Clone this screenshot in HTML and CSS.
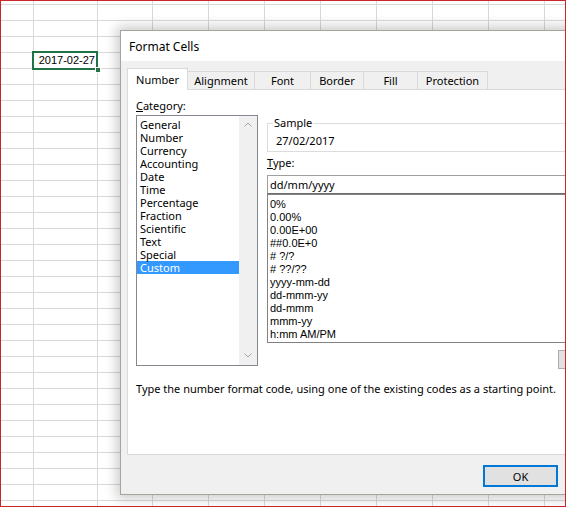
FILE: index.html
```html
<!DOCTYPE html>
<html lang="en">
<head>
  <meta charset="UTF-8">
  <title>Format Cells</title>
  <link rel="stylesheet" href="styles.css">
</head>
<body>
  <div class="screen">
    <!-- Active cell -->
    <div class="cell-cursor">2017-02-27<i class="fill-handle"></i></div>

    <!-- Format Cells dialog -->
    <div class="dialog">
      <div class="titlebar">Format Cells</div>
      <div class="dialog-body">
        <div class="tabs">
          <div class="tab tab--active">Number</div>
          <div class="tab">Alignment</div>
          <div class="tab">Font</div>
          <div class="tab">Border</div>
          <div class="tab">Fill</div>
          <div class="tab">Protection</div>
        </div>

        <div class="panel">
          <div class="columns">
            <div class="category">
              <div class="label"><u>C</u>ategory:</div>
              <div class="listbox">
                <ul class="items">
                  <li>General</li>
                  <li>Number</li>
                  <li>Currency</li>
                  <li>Accounting</li>
                  <li>Date</li>
                  <li>Time</li>
                  <li>Percentage</li>
                  <li>Fraction</li>
                  <li>Scientific</li>
                  <li>Text</li>
                  <li>Special</li>
                  <li class="selected">Custom</li>
                </ul>
                <div class="scrollbar">
                  <svg width="8" height="5" viewBox="0 0 8 5"><polyline points="0.5,4.5 4,1 7.5,4.5" /></svg>
                  <svg width="8" height="5" viewBox="0 0 8 5"><polyline points="0.5,0.5 4,4 7.5,0.5" /></svg>
                </div>
              </div>
            </div>

            <div class="format">
              <fieldset class="sample">
                <legend>Sample</legend>
                <div class="sample-value">27/02/2017</div>
              </fieldset>
              <div class="label type-label"><u>T</u>ype:</div>
              <div class="type-input">dd/mm/yyyy</div>
              <ul class="type-list">
                <li>0%</li>
                <li>0.00%</li>
                <li>0.00E+00</li>
                <li>##0.0E+0</li>
                <li># ?/?</li>
                <li># ??/??</li>
                <li>yyyy-mm-dd</li>
                <li>dd-mmm-yy</li>
                <li>dd-mmm</li>
                <li>mmm-yy</li>
                <li>h:mm AM/PM</li>
              </ul>
              <div class="delete-row">
                <button class="btn btn--small">Delete</button>
              </div>
            </div>
          </div>

          <p class="hint">Type the number format code, using one of the existing codes as a starting point.</p>
        </div>

        <div class="footer">
          <button class="btn btn--default">OK</button>
          <button class="btn">Cancel</button>
        </div>
      </div>
    </div>
  </div>
</body>
</html>
```

FILE: styles.css
```css
*, *:before,
*:after {
  box-sizing: border-box;
}

body {
  margin: 0;
  font: 400 11px "Noto Sans", sans-serif;
  color: #000;
  background: #fff;
}

/* Spreadsheet behind the dialog */
.screen {
  position: relative;
  width: 566px;
  height: 507px;
  border: 1px solid #c9252b;
  overflow: hidden;
  background:
    linear-gradient(#d9d9d9, #d9d9d9) 32px 0 / 1px 100% no-repeat,
    linear-gradient(#d9d9d9, #d9d9d9) 96px 0 / 1px 100% no-repeat,
    linear-gradient(#d9d9d9, #d9d9d9) 151px 0 / 1px 100% no-repeat,
    linear-gradient(#d9d9d9, #d9d9d9) 207px 0 / 1px 100% no-repeat,
    linear-gradient(#d9d9d9, #d9d9d9) 263px 0 / 1px 100% no-repeat,
    linear-gradient(#d9d9d9, #d9d9d9) 319px 0 / 1px 100% no-repeat,
    linear-gradient(#d9d9d9, #d9d9d9) 375px 0 / 1px 100% no-repeat,
    linear-gradient(#d9d9d9, #d9d9d9) 431px 0 / 1px 100% no-repeat,
    linear-gradient(#d9d9d9, #d9d9d9) 487px 0 / 1px 100% no-repeat,
    linear-gradient(#d9d9d9, #d9d9d9) 543px 0 / 1px 100% no-repeat,
    linear-gradient(#d9d9d9 1px, transparent 1px) 0 3px / 100% 16px,
    #fff;
}

.cell-cursor {
  position: absolute;
  left: 31px;
  top: 50px;
  width: 66px;
  height: 19px;
  padding-right: 1px;
  border: 2px solid #217346;
  font: 11px "Liberation Sans", Arial, sans-serif;
  line-height: 15px;
  text-align: right;
}

.fill-handle {
  position: absolute;
  right: -5px;
  bottom: -5px;
  width: 6px;
  height: 6px;
  background: #217346;
  border: 1px solid #fff;
}

/* Dialog */
.dialog {
  position: absolute;
  left: 119px;
  top: 29px;
  width: 528px;
  height: 465px;
  display: flex;
  flex-direction: column;
  background: #f0f0f0;
  border: 1px solid #a8a39b;
  box-shadow: 0 0 12px 3px rgba(0, 0, 0, .22);
}

.titlebar {
  height: 30px;
  display: flex;
  align-items: center;
  padding-left: 8px;
  background: #fff;
  font-size: 12px;
}

.dialog-body {
  flex: 1;
  display: flex;
  flex-direction: column;
  padding: 7px 6px 0;
}

.tabs {
  display: flex;
  align-items: flex-end;
  height: 21px;
}

.tab {
  height: 18px;
  line-height: 17px;
  text-align: center;
  background: #f0f0f0;
  border-top: 1px solid #d9d9d9;
  border-right: 1px solid #d9d9d9;
}

.tab:nth-child(1) { width: 61px; }
.tab:nth-child(2) { width: 67px; }
.tab:nth-child(3) { width: 56px; }
.tab:nth-child(4) { width: 53px; }
.tab:nth-child(5) { width: 54px; }
.tab:nth-child(6) { width: 70px; }

.tab--active {
  position: relative;
  z-index: 1;
  height: 22px;
  line-height: 21px;
  margin-bottom: -1px;
  background: #fff;
  border: 1px solid #d9d9d9;
  border-bottom: 0;
}

.panel {
  height: 366px;
  padding: 7px 7px 0 8px;
  background: #fff;
  border: 1px solid #d9d9d9;
}

.columns {
  display: flex;
  gap: 9px;
}

.category {
  width: 122px;
}

.label {
  height: 18px;
  line-height: 18px;
}

.listbox {
  display: flex;
  height: 251px;
  border: 1px solid #828790;
}

.items {
  width: 102px;
  margin: 0;
  padding: 2px 0 0;
  list-style: none;
}

.items li {
  height: 13px;
  line-height: 13px;
  padding-left: 3px;
}

.items .selected {
  background: #3399ff;
  color: #fff;
}

.scrollbar {
  flex: 1;
  display: flex;
  flex-direction: column;
  justify-content: space-between;
  align-items: center;
  padding: 6px 0 7px;
  background: #f0f0f0;
}

.scrollbar svg {
  fill: none;
  stroke: #a6a6a6;
  stroke-width: 1;
}

.format {
  flex: 1;
  min-width: 0;
  padding-top: 18px;
}

.sample {
  margin: 0;
  padding: 0 0 0 5px;
  border: 1px solid #dcdcdc;
}

.sample legend {
  padding: 0 1px;
  line-height: 16px;
}

.sample-value {
  height: 20px;
  line-height: 20px;
  padding-left: 3px;
}

.type-label {
  margin-top: 3px;
  height: 16px;
  line-height: 16px;
}

.type-input {
  margin-top: 4px;
  height: 19px;
  line-height: 17px;
  padding-left: 2px;
  border: 1px solid #a0a0a0;
  border-bottom-color: #6e6e6e;
}

.type-list {
  height: 149px;
  margin: 0;
  padding: 3px 0 0 2px;
  list-style: none;
  border: 1px solid #828282;
  font: 11px "Liberation Sans", Arial, sans-serif;
}

.type-list li {
  height: 13px;
  line-height: 13px;
}

.delete-row {
  display: flex;
  justify-content: flex-end;
  margin-top: 7px;
}

.hint {
  margin: 12px 0 0;
  line-height: 16px;
}

.footer {
  display: flex;
  justify-content: flex-end;
  gap: 8px;
  padding-top: 10px;
}

.btn {
  width: 75px;
  height: 22px;
  padding: 0;
  font: inherit;
  color: #000;
  background: #e1e1e1;
  border: 1px solid #adadad;
}

.btn--small {
  height: 19px;
}

.btn--default {
  border: 2px solid #0078d7;
}
```
